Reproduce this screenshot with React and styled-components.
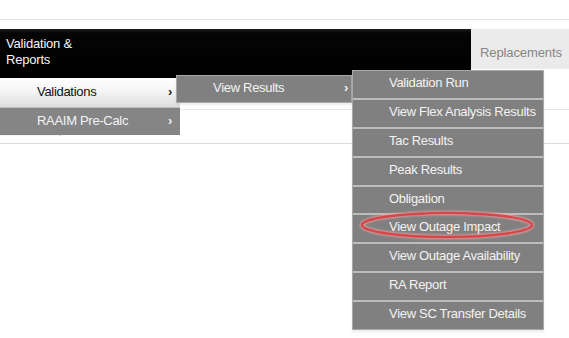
import React from "react";
import styled, { createGlobalStyle } from "styled-components";

const Global = createGlobalStyle`
  html, body { margin: 0; padding: 0; background: #fff; }
  body { font-family: "Liberation Sans", Arial, sans-serif; }
`;

const Page = styled.div`
  position: relative;
  width: 569px;
  height: 338px;
  overflow: hidden;
  background: #fff;
`;

const TopStrip = styled.div`
  height: 19px;
  border-bottom: 1px solid #e2e2e2;
  margin-bottom: 9px;
`;

const NavBar = styled.div`
  display: flex;
  align-items: flex-start;
  height: 49px;
`;

const NavDark = styled.div`
  flex: 0 0 471px;
  height: 49px;
  background: linear-gradient(#1c1c1c 0px, #050505 4px, #000 100%);
  box-sizing: border-box;
  padding: 7px 0 0 6px;
`;

const NavTitle = styled.div`
  color: #f4f4f4;
  font-size: 13px;
  line-height: 16px;
  letter-spacing: -0.2px;
`;

const NavLight = styled.div`
  flex: 1;
  height: 40px;
  background: #ebebeb;
  box-sizing: border-box;
  padding: 16px 0 0 9px;
  color: #858585;
  font-size: 13px;
  line-height: 16px;
  letter-spacing: -0.1px;
`;

const Content = styled.div`
  padding-top: 31px;
`;

const HeaderRow = styled.div`
  display: flex;
  align-items: flex-start;
  height: 33px;
  border-top: 1px solid #e6e6e6;
  border-bottom: 1px solid #dcdcdc;
`;

const FaintCell = styled.div`
  width: 60px;
  height: 16px;
  margin-top: 10px;
  border-right: 1px solid #b8b8b8;
  background: #f4f4f4;
`;

const Menu = styled.div`
  position: absolute;
  left: ${(p) => p.$left}px;
  top: ${(p) => p.$top}px;
  width: ${(p) => p.$width}px;
  box-sizing: border-box;
  background: #bdbdbd;
  border: ${(p) => (p.$bordered ? "1px solid #a9a9a9" : "none")};
  box-shadow: ${(p) => (p.$bordered ? "0 2px 2px rgba(0,0,0,0.08)" : "none")};
  display: flex;
  flex-direction: column;
  gap: ${(p) => p.$gap}px;
`;

const Item = styled.div`
  position: relative;
  display: flex;
  align-items: center;
  height: ${(p) => p.$h}px;
  box-sizing: border-box;
  padding-left: ${(p) => p.$pad}px;
  padding-bottom: ${(p) => p.$lift}px;
  font-size: 13px;
  letter-spacing: -0.3px;
  white-space: nowrap;
  color: ${(p) => (p.$active ? "#111" : "#f3f3f3")};
  background: ${(p) =>
    p.$active
      ? "linear-gradient(#ffffff 0%, #f6f6f6 40%, #dedede 100%)"
      : p.$see
      ? "rgba(128,128,128,0.93)"
      : "#808080"};
`;

const Arrow = styled.span`
  position: absolute;
  right: ${(p) => p.$right}px;
  top: 50%;
  transform: translateY(-62%);
  font-size: 13px;
  font-weight: bold;
  color: ${(p) => (p.$dark ? "#222" : "#f3f3f3")};
`;

const Highlight = styled.svg`
  position: absolute;
  left: 357px;
  top: 210px;
  overflow: visible;
`;

const level3 = [
  "Validation Run",
  "View Flex Analysis Results",
  "Tac Results",
  "Peak Results",
  "Obligation",
  "View Outage Impact",
  "View Outage Availability",
  "RA Report",
  "View SC Transfer Details",
];

export default function App() {
  return (
    <Page>
      <Global />
      <TopStrip />
      <NavBar>
        <NavDark>
          <NavTitle>
            Validation &amp;
            <br />
            Reports
          </NavTitle>
        </NavDark>
        <NavLight>Replacements</NavLight>
      </NavBar>
      <Content>
        <HeaderRow>
          <FaintCell />
        </HeaderRow>
      </Content>

      <Menu $left={0} $top={78} $width={180} $gap={1}>
        <Item $h={29} $pad={37} $lift={2} $active>
          Validations
          <Arrow $right={8} $dark>›</Arrow>
        </Item>
        <Item $h={27} $pad={37} $lift={3} $see>
          RAAIM Pre-Calc
          <Arrow $right={8}>›</Arrow>
        </Item>
      </Menu>

      <Menu $left={176} $top={75} $width={176} $gap={0} $bordered>
        <Item $h={26} $pad={36} $lift={3}>
          View Results
          <Arrow $right={3}>›</Arrow>
        </Item>
      </Menu>

      <Menu $left={352} $top={70} $width={192} $gap={2} $bordered>
        {level3.map((t) => (
          <Item key={t} $h={26.9} $pad={36} $lift={4}>
            {t}
          </Item>
        ))}
      </Menu>

      <Highlight width="176" height="32" viewBox="0 0 176 32">
        <defs>
          <filter id="glow" x="-10%" y="-40%" width="120%" height="180%">
            <feGaussianBlur stdDeviation="0.8" />
          </filter>
        </defs>
        <ellipse cx="90" cy="15" rx="85" ry="12" fill="none" stroke="#e8a0a0" strokeWidth="4" filter="url(#glow)" />
        <ellipse cx="90" cy="15" rx="85" ry="12" fill="none" stroke="#d7464a" strokeWidth="2.4" />
      </Highlight>
    </Page>
  );
}
